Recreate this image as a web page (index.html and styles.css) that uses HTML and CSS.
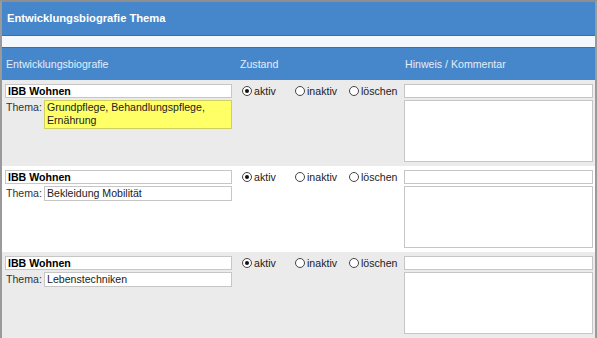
FILE: index.html
```html
<!DOCTYPE html>
<html lang="de">
<head>
  <meta charset="UTF-8">
  <title>Entwicklungsbiografie Thema</title>
  <link rel="stylesheet" href="styles.css">
</head>
<body>
  <div class="frame">
    <div class="title-bar">Entwicklungsbiografie Thema</div>
    <div class="spacer"></div>

    <div class="grid head">
      <div>Entwicklungsbiografie</div>
      <div>Zustand</div>
      <div>Hinweis / Kommentar</div>
    </div>

    <div class="grid row shade">
      <div class="col-left">
        <input class="name" type="text" value="IBB Wohnen">
        <div class="thema">
          <span>Thema:</span>
          <div class="topic highlight">Grundpflege, Behandlungspflege, Ernährung</div>
        </div>
      </div>
      <div class="states">
        <label><input type="radio" name="s1" checked>aktiv</label>
        <label><input type="radio" name="s1">inaktiv</label>
        <label><input type="radio" name="s1">löschen</label>
      </div>
      <div class="col-right">
        <input class="hint" type="text">
        <textarea></textarea>
      </div>
    </div>

    <div class="grid row">
      <div class="col-left">
        <input class="name" type="text" value="IBB Wohnen">
        <div class="thema">
          <span>Thema:</span>
          <div class="topic">Bekleidung Mobilität</div>
        </div>
      </div>
      <div class="states">
        <label><input type="radio" name="s2" checked>aktiv</label>
        <label><input type="radio" name="s2">inaktiv</label>
        <label><input type="radio" name="s2">löschen</label>
      </div>
      <div class="col-right">
        <input class="hint" type="text">
        <textarea></textarea>
      </div>
    </div>

    <div class="grid row shade">
      <div class="col-left">
        <input class="name" type="text" value="IBB Wohnen">
        <div class="thema">
          <span>Thema:</span>
          <div class="topic">Lebenstechniken</div>
        </div>
      </div>
      <div class="states">
        <label><input type="radio" name="s3" checked>aktiv</label>
        <label><input type="radio" name="s3">inaktiv</label>
        <label><input type="radio" name="s3">löschen</label>
      </div>
      <div class="col-right">
        <input class="hint" type="text">
        <textarea></textarea>
      </div>
    </div>
  </div>
</body>
</html>
```
FILE: styles.css
```css
body {
  margin: 0;
  font-family: "Liberation Sans", Arial, sans-serif;
  font-size: 10.6px;
  color: #111;
  background: #fff;
}

.frame {
  height: 338px;
  overflow: hidden;
  border-top: 2px solid #8e8e8e;
  border-left: 2px solid #9a9a9a;
  border-right: 2px solid #9a9a9a;
  box-sizing: border-box;
}

.title-bar {
  height: 33px;
  line-height: 32px;
  padding-left: 5px;
  background: #4687cb;
  border-bottom: 1px solid #3a6fa8;
  color: #fff;
  font-weight: bold;
  font-size: 11.2px;
}

.spacer {
  height: 11px;
  background: #f4f8fc;
}

.grid {
  display: grid;
  grid-template-columns: 234px 165px 1fr;
}

.head {
  height: 32px;
  line-height: 32px;
  background: #4687cb;
  border-top: 1px solid #3a6fa8;
  color: #e4edf8;
  padding-left: 4px;
}

.row {
  height: 86px;
  padding: 4px 0 0 3px;
  box-sizing: border-box;
  background: #fff;
}

.shade {
  background: #ebebeb;
}

.col-left {
  display: flex;
  flex-direction: column;
  gap: 2px;
}

input.name,
input.hint {
  height: 14px;
  margin: 0;
  padding: 0 2px;
  border: 1px solid #c6c6c6;
  background: #fff;
  box-sizing: border-box;
  font: inherit;
}

input.name {
  width: 227px;
  font-weight: bold;
  color: #000;
}

.thema {
  display: flex;
  padding-left: 1px;
}

.thema span {
  width: 38px;
  color: #333;
  line-height: 14px;
}

.topic {
  width: 182px;
  min-height: 12px;
  line-height: 13px;
  padding: 0 2px;
  border: 1px solid #c6c6c6;
  background: #fff;
  color: #222;
}

.topic.highlight {
  background: #ffff66;
  border-color: #d0d060;
  padding-bottom: 1px;
}

.states {
  display: flex;
  padding-left: 3px;
}

.states label {
  display: flex;
  align-items: flex-start;
  line-height: 14px;
  height: 14px;
  width: 53px;
  color: #222;
}

.states label:nth-child(2) {
  width: 54px;
}

.states input {
  appearance: none;
  -webkit-appearance: none;
  width: 10px;
  height: 10px;
  margin: 2px 2px 0 0;
  border: 1px solid #444;
  border-radius: 50%;
  background: #fff;
  box-sizing: border-box;
  position: relative;
  flex: none;
}

.states input:checked::after {
  content: "";
  position: absolute;
  left: 2px;
  top: 2px;
  width: 4px;
  height: 4px;
  border-radius: 50%;
  background: #111;
}

.col-right {
  display: flex;
  flex-direction: column;
  gap: 2px;
}

input.hint {
  width: 189px;
}

textarea {
  width: 189px;
  height: 62px;
  margin: 0;
  padding: 0;
  border: 1px solid #c6c6c6;
  background: #fff;
  resize: none;
  box-sizing: border-box;
}
```
